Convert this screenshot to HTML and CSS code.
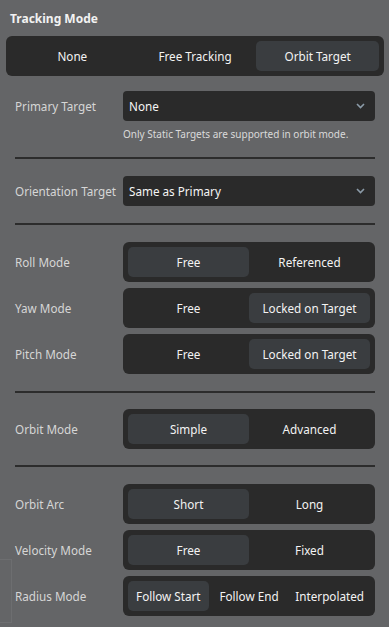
FILE: index.html
```html
<!DOCTYPE html>
<html lang="en">
<head>
<meta charset="utf-8">
<title>Tracking Mode</title>
<link rel="stylesheet" href="styles.css">
</head>
<body>
<div class="panel">
  <h2 class="title">Tracking Mode</h2>
  <div class="seg">
    <div class="opt">None</div>
    <div class="opt">Free Tracking</div>
    <div class="opt on">Orbit Target</div>
  </div>

  <div class="body">
    <div class="row first">
      <span class="label">Primary Target</span>
      <div class="select">
        <span>None</span>
        <svg class="chev" width="9" height="6" viewBox="0 0 9 6"><path d="M1 1 L4.5 4.5 L8 1" fill="none" stroke="#8b9ba8" stroke-width="1.6"/></svg>
      </div>
    </div>
    <div class="hint">Only Static Targets are supported in orbit mode.</div>

    <div class="sep"></div>

    <div class="row">
      <span class="label">Orientation Target</span>
      <div class="select">
        <span>Same as Primary</span>
        <svg class="chev" width="9" height="6" viewBox="0 0 9 6"><path d="M1 1 L4.5 4.5 L8 1" fill="none" stroke="#8b9ba8" stroke-width="1.6"/></svg>
      </div>
    </div>

    <div class="sep"></div>

    <div class="group">
      <div class="row">
        <span class="label">Roll Mode</span>
        <div class="seg small"><div class="opt on">Free</div><div class="opt">Referenced</div></div>
      </div>
      <div class="row">
        <span class="label">Yaw Mode</span>
        <div class="seg small"><div class="opt">Free</div><div class="opt on">Locked on Target</div></div>
      </div>
      <div class="row">
        <span class="label">Pitch Mode</span>
        <div class="seg small"><div class="opt">Free</div><div class="opt on">Locked on Target</div></div>
      </div>
    </div>

    <div class="sep sep-above-single"></div>

    <div class="row">
      <span class="label">Orbit Mode</span>
      <div class="seg small"><div class="opt on">Simple</div><div class="opt">Advanced</div></div>
    </div>

    <div class="sep sep-below-single"></div>

    <div class="group">
      <div class="row">
        <span class="label">Orbit Arc</span>
        <div class="seg small"><div class="opt on">Short</div><div class="opt">Long</div></div>
      </div>
      <div class="row">
        <span class="label">Velocity Mode</span>
        <div class="seg small"><div class="opt on">Free</div><div class="opt">Fixed</div></div>
      </div>
      <div class="row">
        <span class="label">Radius Mode</span>
        <div class="seg small"><div class="opt on">Follow Start</div><div class="opt">Follow End</div><div class="opt">Interpolated</div></div>
      </div>
    </div>
  </div>
</div>
<div class="ghost"></div>
</body>
</html>
```

FILE: styles.css
```css
html, body {
  margin: 0;
  padding: 0;
  background: #646567;
  height: 100%;
  overflow: hidden;
}

body {
  font-family: "Noto Sans", "DejaVu Sans", sans-serif;
  font-size: 11.7px;
  color: #f0f0f0;
  position: relative;
}

.panel {
  padding: 10px 5px 0 6px;
  display: flex;
  flex-direction: column;
}

.title {
  margin: 0 0 8px 4px;
  font-size: 12px;
  font-weight: 700;
  line-height: 18px;
  color: #f2f2f2;
}

.seg {
  display: flex;
  height: 40px;
  box-sizing: border-box;
  padding: 5px;
  background: #2a2a2a;
  border-radius: 6px;
}

.seg .opt {
  flex: 1 1 0;
  display: flex;
  align-items: center;
  justify-content: center;
  border-radius: 5px;
  color: #f3f3f3;
  white-space: nowrap;
}

.seg .opt.on {
  background: #3a3d40;
}

.body {
  padding: 0 9px;
  display: flex;
  flex-direction: column;
}

.row {
  display: flex;
  align-items: center;
}

.row.first {
  margin-top: 15px;
}

.label {
  width: 108px;
  flex: none;
  color: #d6d6d6;
  white-space: nowrap;
}

.row .seg,
.row .select {
  flex: 1;
}

.select {
  height: 30px;
  box-sizing: border-box;
  background: #2a2a2a;
  border-radius: 4px;
  display: flex;
  align-items: center;
  justify-content: space-between;
  padding: 0 10px 0 6px;
  color: #f5f5f5;
}

.chev {
  display: block;
}

.hint {
  margin: 6px 0 0 108px;
  font-size: 10px;
  line-height: 14px;
  color: #dadada;
}

.sep {
  height: 2px;
  background: #2c2c2c;
  margin: 17px 0;
}

.hint + .sep {
  margin-top: 16px;
}

.sep.sep-above-single {
  margin: 17px 0 16px;
}

.sep.sep-below-single {
  margin: 16px 0 17px;
}

.group {
  display: flex;
  flex-direction: column;
  gap: 6px;
}

.ghost {
  position: absolute;
  left: 0;
  top: 559px;
  width: 11px;
  height: 62px;
  border-top: 1px solid #6d6e70;
  border-right: 1px solid #6d6e70;
  border-bottom: 1px solid #6d6e70;
  pointer-events: none;
}
```
